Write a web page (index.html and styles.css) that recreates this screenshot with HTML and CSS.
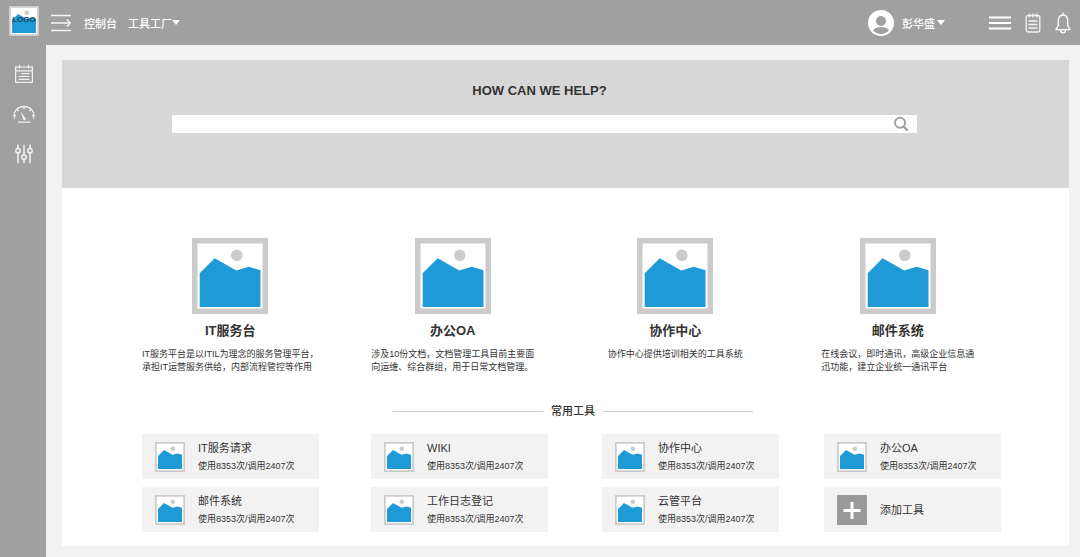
FILE: index.html
```html
<!DOCTYPE html>
<html lang="zh-CN">
<head>
<meta charset="utf-8">
<meta name="viewport" content="width=device-width, initial-scale=1">
<title>工具工厂</title>
<link rel="stylesheet" href="styles.css">
</head>
<body>
<svg class="sprite" aria-hidden="true">
  <symbol id="picture" viewBox="0 0 76 76">
    <rect width="76" height="76" fill="#cbcbcb"/>
    <rect x="5.5" y="5.5" width="65" height="65" fill="#fff"/>
    <path d="M7.7 35.2 22.7 20.2 44.3 32.500 56.7 28.8 68.5 32.2V69H7.7Z" fill="#1e9ad7"/>
    <circle cx="44.8" cy="17.3" r="5.8" fill="#cbcbcb"/>
  </symbol>
  <symbol id="thumb" viewBox="0 0 30 30">
    <rect width="30" height="30" fill="#cbcbcb"/>
    <rect x="1.7" y="1.7" width="26.6" height="26.6" fill="#fff"/>
    <path d="M3 14 9 8 17.5 12.7 22.5 11.5 27 12.8V27H3Z" fill="#1e9ad7"/>
    <circle cx="17.8" cy="6.8" r="2.3" fill="#cbcbcb"/>
  </symbol>
</svg>

<header class="topbar">
  <a class="logo" href="#" aria-label="LOGO">
    <svg class="logo-picture"><use href="#thumb"/></svg>
    <span class="logo-text">LOGO</span>
  </a>
  <button class="icon-button menu-toggle" type="button" aria-label="展开菜单">
    <svg width="20" height="18" viewBox="0 0 20 18" fill="none" stroke="#f4f4f4" stroke-width="1.6"><path d="M0 1.500H20M0 9H18.500M0 16.500H20M16 5.500 19.200 9 16 12.500"/></svg>
  </button>
  <nav class="topnav">
    <a href="#">控制台</a>
    <a href="#" class="with-caret">工具工厂</a>
  </nav>
  <button class="user" type="button">
    <svg width="26" height="26" viewBox="0 0 26 26"><circle cx="13" cy="13" r="13" fill="#fff"/><circle cx="13" cy="11" r="5" fill="#a0a0a0"/><path d="M5 20.500C6.500 17.800 10 17 13 17S19.500 17.800 21 20.500C19 22.900 16 23.900 13 23.900S7 22.900 5 20.500Z" fill="#a0a0a0"/></svg>
    <span class="with-caret">彭华盛</span>
  </button>
  <div class="actions">
    <button class="icon-button" type="button" aria-label="列表">
      <svg width="22" height="14" viewBox="0 0 22 14" stroke="#fff" stroke-width="2"><path d="M0 1.500H22M0 7H22M0 12.500H22"/></svg>
    </button>
    <button class="icon-button" type="button" aria-label="任务">
      <svg width="16" height="20" viewBox="0 0 16 20" fill="none" stroke="#f4f4f4" stroke-width="1.300"><rect x="1.200" y="2.500" width="13.600" height="16.500" rx="2"/><path d="M4.500 .5V4.500M8 .5V4.500M11.500 .5V4.500M3.500 8H12.500M3.500 11.500H12.500M3.500 15H12.500"/></svg>
    </button>
    <button class="icon-button" type="button" aria-label="通知">
      <svg width="16" height="22" viewBox="0 0 16 22" fill="none" stroke="#fff" stroke-width="1.300"><path d="M8 .5V3M8 3C4.500 3 3.300 6 3.300 9V13C3.300 15 1 16 1 17.700H15C15 16 12.700 15 12.700 13V9C12.700 6 11.500 3 8 3ZM5.500 18C5.500 21.800 10.500 21.800 10.500 18"/></svg>
    </button>
  </div>
</header>

<div class="shell">
  <nav class="sidebar">
    <a href="#" aria-label="日程">
      <svg width="20" height="20" viewBox="0 0 20 20" fill="none" stroke="#f0f0f0" stroke-width="1.200"><rect x="1.600" y="3" width="16.800" height="15.400"/><path d="M1.600 6.800H18.400M5.500 .8V4.600M14.500 .8V4.600M7.500 9.700H15.500M4.500 12.500H15.500M4.500 15.300H15.500"/></svg>
    </a>
    <a href="#" aria-label="仪表盘">
      <svg width="22" height="20" viewBox="0 0 22 20" fill="none" stroke="#f0f0f0" stroke-width="1.300"><path d="M1.500 14.500C-.5 7.500 4.500 2.500 11 2.500S22.500 7.500 20.500 14.500M1 11.500H3M19 11.500H21M11 2.500V5M4.200 5.500 5.700 7M17.800 5.500 16.300 7M5 18.200H17.500"/><path d="M7.500 7.500 12.800 14.500A1.500 1.500 0 0 1 10.500 16Z" fill="#f0f0f0" stroke="none"/></svg>
    </a>
    <a href="#" aria-label="设置">
      <svg width="20" height="20" viewBox="0 0 20 20" fill="none" stroke="#f4f4f4" stroke-width="1.500"><path d="M4 .8V4.500M4 9V19.200M10 .8V11M10 15.500V19.200M16 .8V4.500M16 9V19.200"/><circle cx="4" cy="6.700" r="2.200"/><circle cx="10" cy="13.200" r="2.200"/><circle cx="16" cy="6.700" r="2.200"/></svg>
    </a>
  </nav>

  <main class="card">
    <section class="hero">
      <h1>HOW CAN WE HELP?</h1>
      <form class="search" role="search">
        <input type="search" aria-label="搜索">
        <button class="icon-button" type="submit" aria-label="搜索">
          <svg width="16" height="16" viewBox="0 0 16 16" fill="none" stroke="#a0a0a0" stroke-width="2"><circle cx="7" cy="6.800" r="5"/><path d="M10.500 10.500 14.500 14.300" stroke-width="2.400"/></svg>
        </button>
      </form>
    </section>

    <section class="features">
      <article class="feature">
        <svg class="feature-picture"><use href="#picture"/></svg>
        <h2>IT服务台</h2>
        <p>IT服务平台是以ITIL为理念的服务管理平台，<br>承担IT运营服务供给，内部流程管控等作用</p>
      </article>
      <article class="feature">
        <svg class="feature-picture"><use href="#picture"/></svg>
        <h2>办公OA</h2>
        <p>涉及10份文档，文档管理工具目前主要面<br>向运维、综合群组，用于日常文档管理。</p>
      </article>
      <article class="feature">
        <svg class="feature-picture"><use href="#picture"/></svg>
        <h2>协作中心</h2>
        <p>协作中心提供培训相关的工具系统</p>
      </article>
      <article class="feature">
        <svg class="feature-picture"><use href="#picture"/></svg>
        <h2>邮件系统</h2>
        <p>在线会议，即时通讯，高级企业信息通<br>迅功能，建立企业统一通讯平台</p>
      </article>
    </section>

    <h2 class="divider">常用工具</h2>

    <section class="tools">
      <a class="tool" href="#"><svg class="thumb"><use href="#thumb"/></svg><span class="tool-text"><span class="tool-name">IT服务请求</span><span class="tool-count">使用8353次/调用2407次</span></span></a>
      <a class="tool" href="#"><svg class="thumb"><use href="#thumb"/></svg><span class="tool-text"><span class="tool-name">WIKI</span><span class="tool-count">使用8353次/调用2407次</span></span></a>
      <a class="tool" href="#"><svg class="thumb"><use href="#thumb"/></svg><span class="tool-text"><span class="tool-name">协作中心</span><span class="tool-count">使用8353次/调用2407次</span></span></a>
      <a class="tool" href="#"><svg class="thumb"><use href="#thumb"/></svg><span class="tool-text"><span class="tool-name">办公OA</span><span class="tool-count">使用8353次/调用2407次</span></span></a>
      <a class="tool" href="#"><svg class="thumb"><use href="#thumb"/></svg><span class="tool-text"><span class="tool-name">邮件系统</span><span class="tool-count">使用8353次/调用2407次</span></span></a>
      <a class="tool" href="#"><svg class="thumb"><use href="#thumb"/></svg><span class="tool-text"><span class="tool-name">工作日志登记</span><span class="tool-count">使用8353次/调用2407次</span></span></a>
      <a class="tool" href="#"><svg class="thumb"><use href="#thumb"/></svg><span class="tool-text"><span class="tool-name">云管平台</span><span class="tool-count">使用8353次/调用2407次</span></span></a>
      <button class="tool" type="button"><svg class="thumb" viewBox="0 0 30 30"><rect width="30" height="30" fill="#999"/><path d="M15 7V24M6.500 15.500H23.500" stroke="#fff" stroke-width="3"/></svg><span class="tool-name">添加工具</span></button>
    </section>
  </main>
</div>
</body>
</html>
```

FILE: styles.css
```css
* {
  box-sizing: border-box;
}

body {
  margin: 0;
  min-height: 100vh;
  display: flex;
  flex-direction: column;
  background: #f2f2f2;
  color: #333;
  font-family: "Liberation Sans", "Noto Sans CJK SC", sans-serif;
  font-size: 11px;
}

h1,
h2,
p {
  margin: 0;
}

a {
  color: inherit;
  text-decoration: none;
}

button {
  padding: 0;
  border: 0;
  background: none;
  color: inherit;
  font: inherit;
  cursor: pointer;
}

svg {
  display: block;
  flex: none;
}

.sprite {
  position: absolute;
  width: 0;
  height: 0;
}

.icon-button {
  display: flex;
}

/* Top bar */
.topbar {
  display: flex;
  align-items: center;
  height: 45px;
  padding: 0 9px;
  background: #a0a0a0;
  color: #fff;
  font-weight: 500;
}

.logo {
  position: relative;
  margin-bottom: 3px;
}

.logo-picture {
  width: 30px;
  height: 30px;
}

.logo-text {
  position: absolute;
  inset: 0;
  color: #1d3f52;
  font-size: 8px;
  font-weight: 700;
  line-height: 28px;
  text-align: center;
}

.menu-toggle {
  margin-left: 12px;
}

.topnav {
  display: flex;
  gap: 11px;
  margin-left: 13px;
}

.with-caret {
  display: flex;
  align-items: center;
}

.with-caret::after {
  content: "";
  border: 4px solid transparent;
  border-top: 5px solid #fff;
  border-bottom: 0;
}

.user {
  display: flex;
  align-items: center;
  gap: 8px;
  margin-left: auto;
}

.user .with-caret::after {
  margin-left: 2px;
}

.actions {
  display: flex;
  align-items: center;
  gap: 14px;
  margin-left: 44px;
}

/* Sidebar and content */
.shell {
  display: flex;
  flex: 1;
}

.sidebar {
  display: flex;
  flex-direction: column;
  align-items: center;
  gap: 20px;
  width: 46px;
  padding: 19px 0 0 1px;
  background: #a0a0a0;
}

.card {
  flex: 1;
  margin: 15px 11px 11px 16px;
  background: #fff;
}

.hero {
  padding: 21px 152px 55px 110px;
  background: #d7d7d7;
}

.hero h1 {
  padding-right: 10px;
  font-size: 13px;
  line-height: 20px;
  text-align: center;
}

.search {
  display: flex;
  align-items: center;
  height: 18px;
  margin-top: 14px;
  padding-right: 8px;
  background: #fff;
}

.search input {
  flex: 1;
  min-width: 0;
  height: 18px;
  padding: 0 8px;
  border: 0;
  outline: 0;
  background: none;
  font: inherit;
}

/* Features */
.features {
  display: grid;
  grid-template-columns: repeat(4, 1fr);
  padding: 50px 60px 0 57px;
}

.feature {
  display: flex;
  flex-direction: column;
  align-items: center;
}

.feature-picture {
  width: 76px;
  height: 76px;
}

.feature h2 {
  margin-top: 7px;
  font-size: 13px;
  line-height: 20px;
}

.feature p {
  margin-top: 7px;
  font-size: 9px;
  line-height: 13px;
  white-space: nowrap;
}

.divider {
  display: flex;
  align-items: center;
  justify-content: center;
  gap: 8px;
  margin-top: 29px;
  padding-left: 15px;
  font-size: 11px;
  font-weight: 500;
  line-height: 16px;
}

.divider::before,
.divider::after {
  content: "";
  width: 150px;
  height: 1px;
  background: #ccc;
}

/* Tools */
.tools {
  display: grid;
  grid-template-columns: 229fr 231fr 222fr 177fr;
  row-gap: 8px;
  padding: 15px 68px 14px 80px;
}

.tool {
  display: flex;
  align-items: center;
  gap: 13px;
  width: 177px;
  height: 45px;
  padding-left: 13px;
  background: #f2f2f2;
  text-align: left;
}

.thumb {
  width: 30px;
  height: 30px;
}

.tool-text {
  display: flex;
  flex-direction: column;
  gap: 4px;
}

.tool-name {
  font-size: 11px;
  line-height: 16px;
}

.tool-count {
  font-size: 9px;
  line-height: 13px;
}
```
